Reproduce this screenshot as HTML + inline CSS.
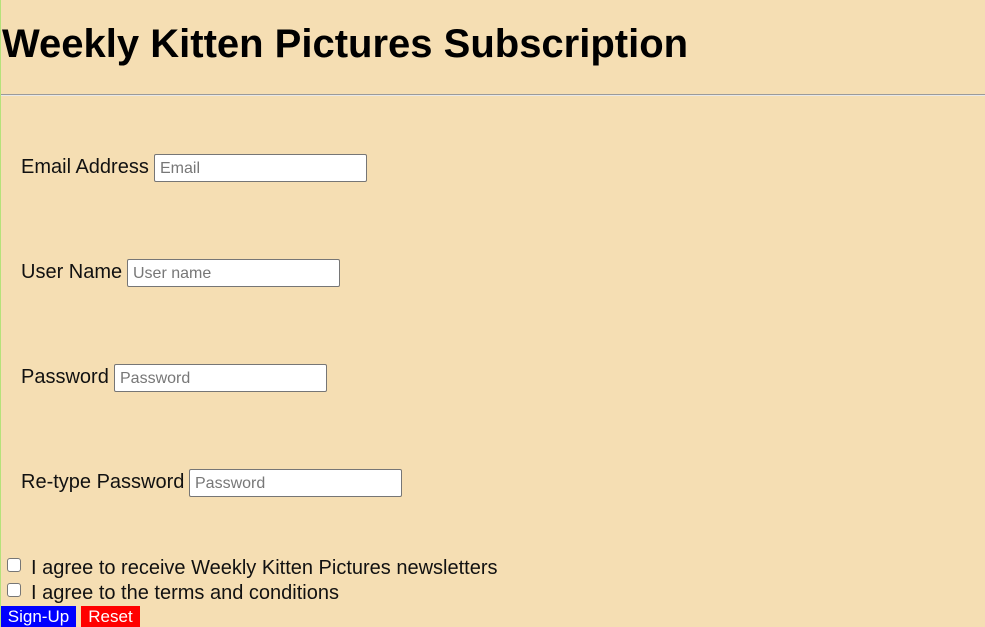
<!DOCTYPE html>
<html><head><style>
body{margin:0;width:985px;height:627px;background:#f5deb3;font-family:"Liberation Sans",Arial,sans-serif;position:relative;overflow:hidden;border-left:1px solid #b5e27a;box-sizing:border-box}
.a{position:absolute;white-space:nowrap}
h1{position:absolute;left:1px;top:22px;margin:0;font-size:40px;font-weight:bold;color:#000}
.hr{position:absolute;left:0px;right:0;top:94px;height:0;border-top:1px solid #9a9a9a;border-bottom:1px solid #e8e8e8}
.lbl{font-size:20px;color:#111}
.in{position:absolute;height:28px;width:213px;box-sizing:border-box;border:1px solid #767676;border-radius:2px;background:#fff;font-size:16px;color:#777;padding:5px 0 0 5px}
.cb{position:absolute;left:6px;width:14px;height:14px;box-sizing:border-box;border:1px solid #767676;border-radius:3px;background:#fff}
.btn{position:absolute;top:606px;height:21px;color:#fff;font-size:17px;line-height:21px;text-align:center}
</style></head><body>
<h1>Weekly Kitten Pictures Subscription</h1>
<div class="hr"></div>
<div class="a lbl" style="left:20px;top:156px">Email Address</div><div class="in" style="left:153px;top:154px">Email</div>
<div class="a lbl" style="left:20px;top:261px">User Name</div><div class="in" style="left:126px;top:259px">User name</div>
<div class="a lbl" style="left:20px;top:366px">Password</div><div class="in" style="left:113px;top:364px">Password</div>
<div class="a lbl" style="left:20px;top:471px">Re-type Password</div><div class="in" style="left:188px;top:469px">Password</div>
<div class="cb" style="top:558px"></div><div class="a lbl" style="left:30px;top:557px">I agree to receive Weekly Kitten Pictures newsletters</div>
<div class="cb" style="top:583px"></div><div class="a lbl" style="left:30px;top:582px">I agree to the terms and conditions</div>
<div class="btn" style="left:0px;width:75px;background:#0000ff">Sign-Up</div>
<div class="btn" style="left:80px;width:59px;background:#ff0000">Reset</div>
</body></html>
